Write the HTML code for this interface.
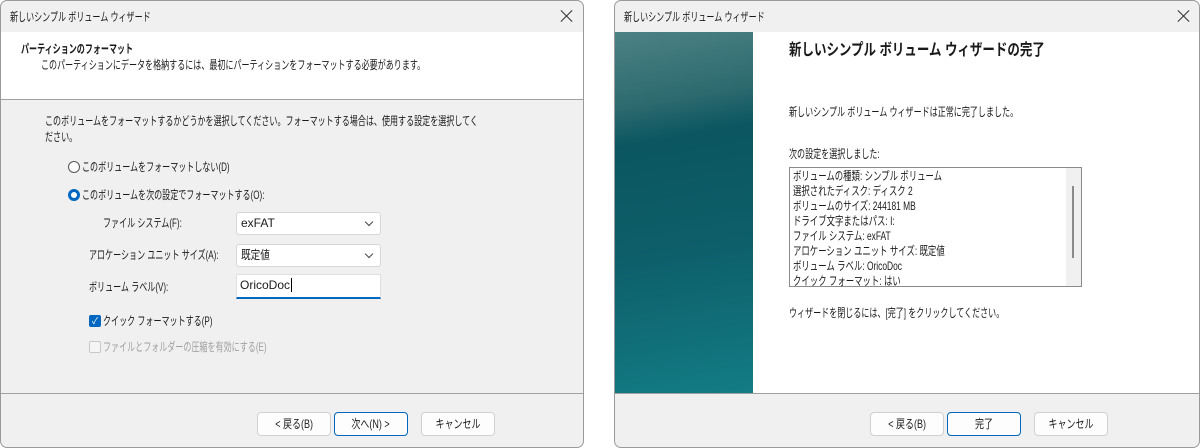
<!DOCTYPE html>
<html><head><meta charset="utf-8"><style>
*{box-sizing:border-box;margin:0;padding:0}
body{width:1200px;height:448px;background:#fff;position:relative;overflow:hidden;font-family:"Liberation Sans","Noto Sans CJK JP",sans-serif;font-size:12px;color:#1a1a1a}
.a{position:absolute;white-space:nowrap;line-height:16px;transform:scaleX(.67);transform-origin:left center}
.win{position:absolute;top:0;height:448px;background:#f0f0f0;border:1px solid #9a9a9a;border-radius:7px;overflow:hidden}
.btn{position:absolute;height:24px;background:#fdfdfd;border:1px solid #d0d0d0;border-radius:4px;text-align:center;line-height:22px}
.btn span{display:inline-block;transform:scaleX(.75)}
.btn.d{border:1px solid #0067c0}
.sel{position:absolute;height:23px;background:#fff;border:1px solid #d6d6d6;border-radius:3px;padding-left:4px;line-height:21px}
.sel:after{content:"";position:absolute;right:8px;top:6px;width:5px;height:5px;border-right:1px solid #444;border-bottom:1px solid #444;transform:rotate(45deg)}
.x{position:absolute;top:9px;width:12px;height:12px}
.x:before,.x:after{content:"";position:absolute;left:5px;top:-2px;width:1px;height:16px;background:#333;transform:rotate(45deg)}
.x:after{transform:rotate(-45deg)}
</style></head><body>
<div class="win" style="left:0;width:584px">
 <div class="a" style="left:9px;top:8px">新しいシンプル ボリューム ウィザード</div>
 <div class="x" style="left:560px"></div>
 <div style="position:absolute;left:0;top:31px;width:584px;height:68px;background:#fff;border-bottom:1px solid #a0a0a0"></div>
 <div class="a" style="left:20px;top:40px;font-weight:bold">パーティションのフォーマット</div>
 <div class="a" style="left:40px;top:56px">このパーティションにデータを格納するには、最初にパーティションをフォーマットする必要があります。</div>
 <div class="a" style="left:44px;top:112px">このボリュームをフォーマットするかどうかを選択してください。フォーマットする場合は、使用する設定を選択してく</div>
 <div class="a" style="left:44px;top:128px">ださい。</div>
 <div style="position:absolute;left:67px;top:160px;width:12px;height:12px;border:1px solid #555;border-radius:50%;background:#fff"></div>
 <div class="a" style="left:81px;top:158px">このボリュームをフォーマットしない(D)</div>
 <div style="position:absolute;left:67px;top:188px;width:12px;height:12px;border-radius:50%;background:#fff;border:3.5px solid #0067c0"></div>
 <div class="a" style="left:81px;top:186px">このボリュームを次の設定でフォーマットする(O):</div>
 <div class="a" style="left:102px;top:214px">ファイル システム(F):</div>
 <div class="sel" style="left:235px;top:211px;width:145px">exFAT</div>
 <div class="a" style="left:88px;top:246px">アロケーション ユニット サイズ(A):</div>
 <div class="sel" style="left:235px;top:243px;width:145px"><span style="display:inline-block;transform:scaleX(.8);transform-origin:left">既定値</span></div>
 <div class="a" style="left:88px;top:278px">ボリューム ラベル(V):</div>
 <div style="position:absolute;left:235px;top:273px;width:145px;height:25px;background:#fff;border:1px solid #e0e0e0;border-bottom:2px solid #0067c0;padding-left:3px;line-height:21px">OricoDoc<span style="border-left:1px solid #000;margin-left:1px"></span></div>
 <div style="position:absolute;left:88px;top:314px;width:12px;height:12px;border-radius:2px;background:#0067c0;color:#fff;font-size:9px;line-height:12px;text-align:center">✓</div>
 <div class="a" style="left:102px;top:312px">クイック フォーマットする(P)</div>
 <div style="position:absolute;left:88px;top:340px;width:12px;height:12px;border-radius:2px;border:1px solid #c8c8c8;background:#f5f5f5"></div>
 <div class="a" style="left:102px;top:338px;color:#a0a0a0">ファイルとフォルダーの圧縮を有効にする(E)</div>
 <div style="position:absolute;left:0;top:392px;width:584px;border-top:1px solid #a0a0a0"></div>
 <div class="btn" style="left:256px;top:411px;width:74px"><span>&lt; 戻る(B)</span></div>
 <div class="btn d" style="left:333px;top:411px;width:74px"><span>次へ(N) &gt;</span></div>
 <div class="btn" style="left:420px;top:411px;width:74px"><span>キャンセル</span></div>
</div>
<div class="win" style="left:614px;width:586px">
 <div class="a" style="left:9px;top:8px">新しいシンプル ボリューム ウィザード</div>
 <div class="x" style="left:563px"></div>
 <div style="position:absolute;left:0;top:31px;width:138px;height:362px;background:linear-gradient(170deg,#4d8284 0%,#2c6a6f 20%,#0b5660 30%,#0d5f6a 60%,#137c85 100%)"></div>
 <div style="position:absolute;left:138px;top:31px;width:448px;height:362px;background:#fff"></div>
 <div class="a" style="left:174px;top:40px;font-size:16px;line-height:20px;font-weight:bold;transform:scaleX(.78)">新しいシンプル ボリューム ウィザードの完了</div>
 <div class="a" style="left:174px;top:103px">新しいシンプル ボリューム ウィザードは正常に完了しました。</div>
 <div class="a" style="left:174px;top:145px">次の設定を選択しました:</div>
 <div style="position:absolute;left:174px;top:166px;width:293px;height:120px;border:1px solid #8a8a8a;background:#fff;overflow:hidden">
  <div style="position:absolute;right:0;top:0;width:15px;height:118px;background:#f0f0f0"></div>
  <div style="position:absolute;right:7px;top:18px;width:2px;height:72px;background:#8a8a8a"></div>
  <div style="position:absolute;left:3px;top:1px;line-height:15px;white-space:nowrap;transform:scaleX(.7);transform-origin:left top">ボリュームの種類: シンプル ボリューム<br>選択されたディスク: ディスク 2<br>ボリュームのサイズ: 244181 MB<br>ドライブ文字またはパス: I:<br>ファイル システム: exFAT<br>アロケーション ユニット サイズ: 既定値<br>ボリューム ラベル: OricoDoc<br>クイック フォーマット: はい</div>
 </div>
 <div class="a" style="left:174px;top:304px">ウィザードを閉じるには、[完了] をクリックしてください。</div>
 <div style="position:absolute;left:0;top:392px;width:586px;border-top:1px solid #a0a0a0"></div>
 <div class="btn" style="left:255px;top:411px;width:74px"><span>&lt; 戻る(B)</span></div>
 <div class="btn d" style="left:332px;top:411px;width:74px"><span>完了</span></div>
 <div class="btn" style="left:419px;top:411px;width:74px"><span>キャンセル</span></div>
</div>
</body></html>
